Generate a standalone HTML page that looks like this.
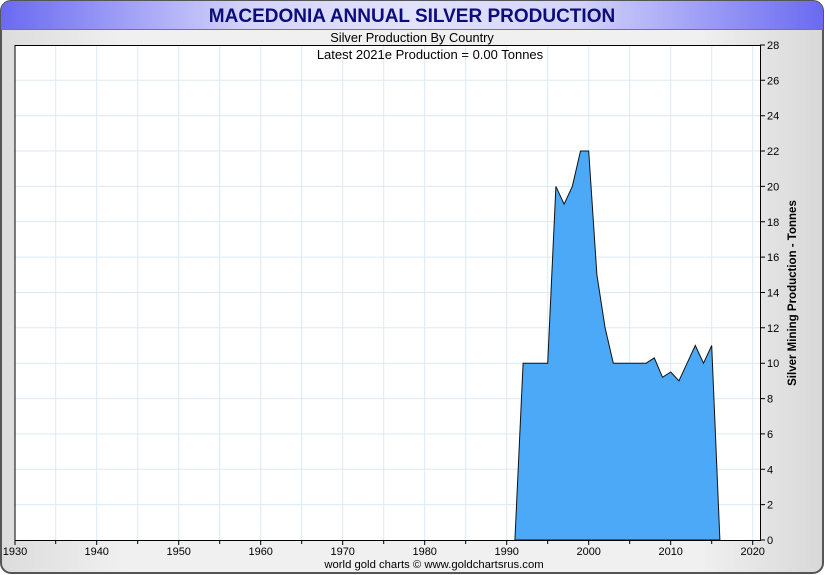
<!DOCTYPE html>
<html><head><meta charset="utf-8"><style>
html,body{margin:0;padding:0;width:825px;height:575px;overflow:hidden;background:#fff;}
svg{display:block;font-family:"Liberation Sans",sans-serif;}
</style></head><body>
<svg width="825" height="575" viewBox="0 0 825 575" xmlns="http://www.w3.org/2000/svg">
<defs>
<linearGradient id="tb" x1="0" x2="1" y1="0" y2="0">
<stop offset="0" stop-color="#6a6af2"/><stop offset="0.3" stop-color="#d4d4fa"/><stop offset="0.5" stop-color="#e2e2fc"/><stop offset="0.7" stop-color="#d4d4fa"/><stop offset="1" stop-color="#6a6af2"/>
</linearGradient>
<linearGradient id="bg" x1="0" x2="1" y1="0" y2="0">
<stop offset="0" stop-color="#dcdcdc"/><stop offset="0.15" stop-color="#f0f0f0"/><stop offset="0.85" stop-color="#f0f0f0"/><stop offset="1" stop-color="#d8d8d8"/>
</linearGradient>
</defs>
<rect x="1" y="1" width="822" height="572" rx="10" fill="url(#bg)" stroke="#555" stroke-width="2"/>
<path d="M1 29 V11 A10 10 0 0 1 11 1 H813 A10 10 0 0 1 823 11 V29 Z" fill="url(#tb)"/>
<line x1="1" y1="29.5" x2="823" y2="29.5" stroke="#777" stroke-width="1"/>
<text x="412" y="22" text-anchor="middle" font-size="19" font-weight="bold" fill="#0c0c7a">MACEDONIA ANNUAL SILVER PRODUCTION</text>
<text x="412" y="42" text-anchor="middle" font-size="12.8" fill="#000">Silver Production By Country</text>
<rect x="15" y="45" width="745" height="495" fill="#fff"/>
<g stroke="#dceaf5" stroke-width="1">
<path d="M55.7 45V540M96.7 45V540M137.7 45V540M178.7 45V540M219.7 45V540M260.7 45V540M301.7 45V540M342.7 45V540M383.7 45V540M424.7 45V540M465.7 45V540M506.7 45V540M547.7 45V540M588.7 45V540M629.7 45V540M670.7 45V540M711.7 45V540M752.7 45V540"/>
<path d="M15 504.6H760M15 469.3H760M15 433.9H760M15 398.6H760M15 363.2H760M15 327.8H760M15 292.5H760M15 257.1H760M15 221.8H760M15 186.4H760M15 151H760M15 115.7H760M15 80.3H760"/>
</g>
<text x="430" y="59" text-anchor="middle" font-size="13" fill="#000">Latest 2021e Production = 0.00 Tonnes</text>
<path d="M514.9 540 L523.1 363.2 L547.7 363.2 L555.9 186.4 L564.1 204.1 L572.3 186.4 L580.5 151 L588.7 151 L596.9 274.8 L605.1 327.8 L613.3 363.2 L646.1 363.2 L654.3 357.9 L662.5 377.3 L670.7 372 L678.9 380.9 L687.1 363.2 L695.3 345.5 L703.5 363.2 L711.7 345.5 L719.9 540 Z" fill="#4ca9f7" stroke="#111" stroke-width="1"/>
<path d="M15 540.5H760.5V45M15 45.5H760M15 45V540" fill="none" stroke="#000" stroke-width="1"/>
<g stroke="#000" stroke-width="1">
<path d="M15 540V545M55.7 540V544M96.7 540V545M137.7 540V544M178.7 540V545M219.7 540V544M260.7 540V545M301.7 540V544M342.7 540V545M383.7 540V544M424.7 540V545M465.7 540V544M506.7 540V545M547.7 540V544M588.7 540V545M629.7 540V544M670.7 540V545M711.7 540V544M752.7 540V545"/>
<path d="M760 540H765M760 504.6H765M760 469.3H765M760 433.9H765M760 398.6H765M760 363.2H765M760 327.8H765M760 292.5H765M760 257.1H765M760 221.8H765M760 186.4H765M760 151H765M760 115.7H765M760 80.3H765M760 45H765"/>
</g>
<g font-size="11" fill="#000">
<text x="15" y="555" text-anchor="middle">1930</text><text x="96.7" y="555" text-anchor="middle">1940</text><text x="178.7" y="555" text-anchor="middle">1950</text><text x="260.7" y="555" text-anchor="middle">1960</text><text x="342.7" y="555" text-anchor="middle">1970</text><text x="424.7" y="555" text-anchor="middle">1980</text><text x="506.7" y="555" text-anchor="middle">1990</text><text x="588.7" y="555" text-anchor="middle">2000</text><text x="670.7" y="555" text-anchor="middle">2010</text><text x="752.7" y="555" text-anchor="middle">2020</text>
</g>
<g font-size="11" fill="#000">
<text x="767" y="544">0</text><text x="767" y="508.6">2</text><text x="767" y="473.3">4</text><text x="767" y="437.9">6</text><text x="767" y="402.6">8</text><text x="767" y="367.2">10</text><text x="767" y="331.8">12</text><text x="767" y="296.5">14</text><text x="767" y="261.1">16</text><text x="767" y="225.8">18</text><text x="767" y="190.4">20</text><text x="767" y="155">22</text><text x="767" y="119.7">24</text><text x="767" y="84.3">26</text><text x="767" y="49">28</text>
</g>
<text transform="translate(796,293) rotate(-90)" text-anchor="middle" font-size="11.5" font-weight="bold" fill="#000">Silver Mining Production - Tonnes</text>
<text x="434" y="568" text-anchor="middle" font-size="11.3" fill="#000">world gold charts © www.goldchartsrus.com</text>
</svg>
</body></html>
